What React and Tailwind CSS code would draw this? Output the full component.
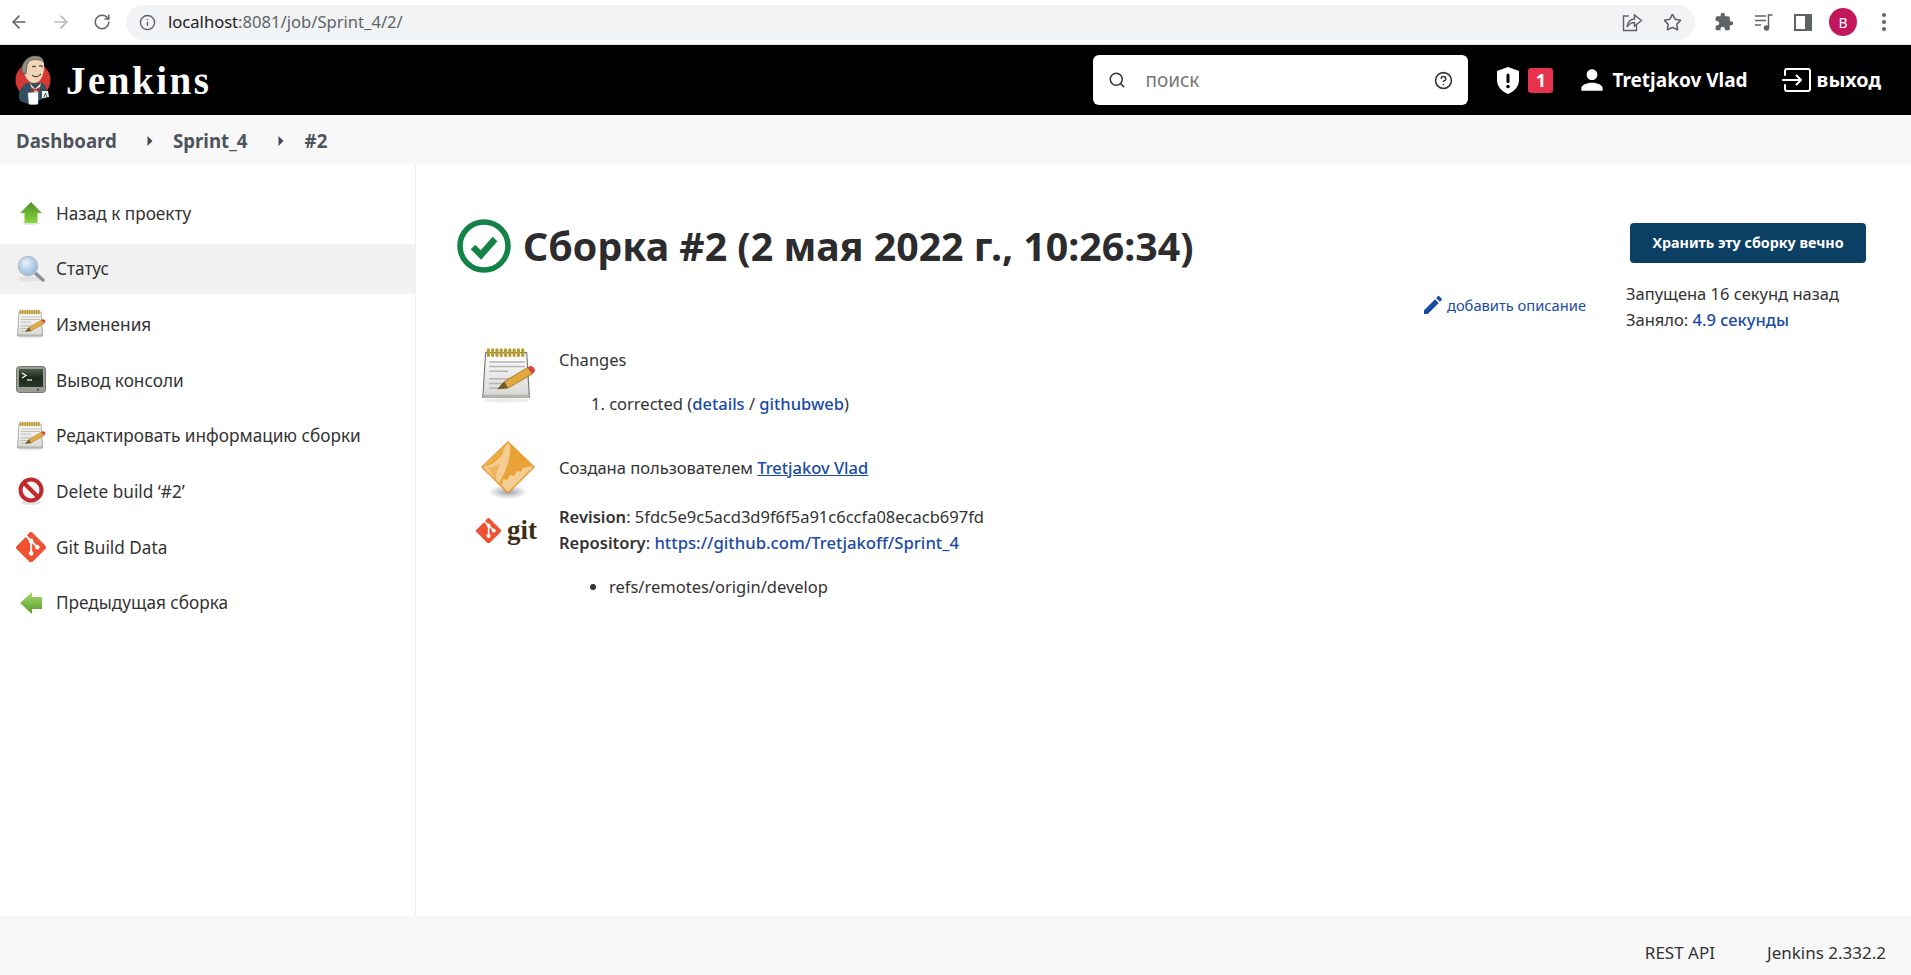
import React from "react";
import { ArrowLeft, ArrowRight, RotateCw, Info, Star, Search, CircleHelp } from "lucide-react";

// Tango style icons, drawn by hand
const UpIcon = () => (
  <svg width="24" height="24" viewBox="0 0 24 24">
    <defs>
      <linearGradient id="up" x1="0" y1="0" x2="0" y2="1">
        <stop offset="0" stopColor="#4c8f2a" />
        <stop offset="1" stopColor="#8ad63c" />
      </linearGradient>
    </defs>
    <ellipse cx="12" cy="22.5" rx="9" ry="1.5" fill="#e2e2e2" />
    <path d="M12 1 L23 12 H18.5 V22 H5.5 V12 H1 Z" fill="url(#up)" />
  </svg>
);

const LeftIcon = () => (
  <svg width="24" height="24" viewBox="0 0 24 24">
    <defs>
      <linearGradient id="left" x1="0" y1="0" x2="0" y2="1">
        <stop offset="0" stopColor="#a8dc70" />
        <stop offset="1" stopColor="#55982a" />
      </linearGradient>
    </defs>
    <path d="M1 12 L13 1 V6 H23 V18 H13 V23 Z" fill="url(#left)" />
  </svg>
);

const SearchIcon = () => (
  <svg width="30" height="30" viewBox="0 0 30 30">
    <defs>
      <radialGradient id="lens" cx="0.4" cy="0.35" r="0.7">
        <stop offset="0" stopColor="#e8f2fb" />
        <stop offset="1" stopColor="#8fb4dc" />
      </radialGradient>
    </defs>
    <ellipse cx="14" cy="25" rx="12" ry="2.5" fill="#e2e2e2" />
    <path d="M18 18 L27 26" stroke="#8a8f92" strokeWidth="3.6" strokeLinecap="round" />
    <circle cx="12" cy="12" r="9.5" fill="url(#lens)" stroke="#b4bec6" strokeWidth="1.6" />
  </svg>
);

const NotepadIcon = ({ size = 30 }) => (
  <svg width={size} height={size} viewBox="0 0 30 30">
    <defs>
      <linearGradient id="pad" x1="0" y1="0" x2="0" y2="1">
        <stop offset="0" stopColor="#ffffff" />
        <stop offset="1" stopColor="#d6d6d2" />
      </linearGradient>
    </defs>
    <ellipse cx="14.5" cy="28.5" rx="12" ry="1.2" fill="#ececec" />
    <path d="M3 3 H25 L26.5 27 H1.5 Z" fill="url(#pad)" stroke="#77776f" strokeWidth="0.6" />
    <rect x="1.6" y="25.5" width="24.8" height="1.8" fill="#b5b5b0" />
    <path d="M4.5 1.5 V4.5 M6.8 1.5 V4.5 M9.1 1.5 V4.5 M11.4 1.5 V4.5 M13.7 1.5 V4.5 M16 1.5 V4.5 M18.3 1.5 V4.5 M20.6 1.5 V4.5 M22.9 1.5 V4.5" stroke="#b89c2f" strokeWidth="1.7" strokeLinecap="round" />
    <path d="M5 8 H24 M5 10.5 H24 M5 13 H15 M5 17 H18 M5 19.5 H14 M5 22 H12" stroke="#b4b4b0" strokeWidth="0.8" />
    <path d="M9.5 22.5 L13 18.5 L25.5 11 L28 14.5 L15 22 Z" fill="#e1a93f" stroke="#8f6a1e" strokeWidth="0.4" />
    <path d="M9.5 22.5 L13 18.5 L15 22 Z" fill="#6e5a30" />
    <path d="M25.5 11 L27 10 Q29.3 10.5 29.5 12.8 L28 14.5 Z" fill="#d8433c" />
  </svg>
);

const TerminalIcon = () => (
  <svg width="30" height="28" viewBox="0 0 30 28">
    <defs>
      <linearGradient id="screen" x1="0" y1="0" x2="0" y2="1">
        <stop offset="0" stopColor="#4d5c48" />
        <stop offset="0.5" stopColor="#1d2a1a" />
        <stop offset="1" stopColor="#2a3a26" />
      </linearGradient>
    </defs>
    <rect x="0.5" y="0.5" width="29" height="26" rx="3" fill="#9a9d97" stroke="#77796f" />
    <rect x="3" y="3" width="24" height="18" fill="url(#screen)" />
    <path d="M6 7 L10 9.5 L6 12" stroke="#fff" strokeWidth="1.2" fill="none" />
    <path d="M11 14 H16" stroke="#fff" strokeWidth="1.2" />
    <rect x="21" y="23" width="2" height="1.4" fill="#333" />
  </svg>
);

const NoIcon = () => (
  <svg width="28" height="28" viewBox="0 0 28 28">
    <ellipse cx="14" cy="25.5" rx="10" ry="2.3" fill="#e0e0e0" />
    <circle cx="14" cy="13" r="10.5" fill="#f4f4f4" stroke="#c1272d" strokeWidth="4" />
    <path d="M6.5 5.5 L21.5 20.5" stroke="#c1272d" strokeWidth="4" />
  </svg>
);

const GitMark = ({ size = 30 }) => (
  <svg width={size} height={size} viewBox="0 0 92 92">
    <path
      fill="#f05133"
      d="M90.2 41.9 50.1 1.8a5.9 5.9 0 0 0-8.4 0l-8.3 8.3 10.6 10.6a7 7 0 0 1 8.9 9l10.2 10.2a7 7 0 1 1-4.2 4l-9.5-9.5v25a7 7 0 1 1-5.8-.2V34.9a7 7 0 0 1-3.8-9.2L29.9 15.3 1.8 43.4a5.9 5.9 0 0 0 0 8.4l40.1 40.1a5.9 5.9 0 0 0 8.4 0l39.9-39.9a5.9 5.9 0 0 0 0-8.4"
    />
  </svg>
);

const FingerprintIcon = () => (
  <svg width="56" height="58" viewBox="0 0 56 58">
    <defs>
      <radialGradient id="shadow" cx="0.5" cy="0.5" r="0.5">
        <stop offset="0" stopColor="#9aa2aa" />
        <stop offset="1" stopColor="#ffffff" />
      </radialGradient>
    </defs>
    <ellipse cx="28" cy="51" rx="20" ry="7" fill="url(#shadow)" />
    <path d="M28 1 L54 26 L28 52 L2 26 Z" fill="#f3cd92" stroke="#ea9a2e" strokeWidth="1.5" />
    <path d="M28 2 L24 8 C22 16 17 22 4 26 L28 2 Z" fill="#eca93f" />
    <path d="M30 3 L52 25 L43 27 L41 31 L37 30 L34 35 L30 34 L27 39 L23 38 L22 44 L19 42 C25 32 31 20 30 3 Z" fill="#e9a238" />
    <path d="M8 27 L20 23 C17 30 15 36 17 41 Z" fill="#eeb45e" />
  </svg>
);

const JenkinsLogo = () => (
  <svg width="38" height="50" viewBox="0 0 38 50">
    <circle cx="18" cy="25" r="17.5" fill="#d33833" />
    <path d="M5 46 C2 38 6 31 12 28 L27 28 C32 31 33 37 31 43 L22 46 L16 50 Z" fill="#335061" />
    <path d="M15 28 L20 34 L26 28 L24 36 L20 37 L17 35 Z" fill="#e7e7e2" />
    <path d="M16 32 L20 34.5 L25 32 L25 36.5 L20 35.5 L16 37 Z" fill="#b3302c" />
    <path d="M8 13 C8 6 14 1 20 1 C27 1 30 7 29 14 C28 22 25 28 19 28 C13 28 9 21 8 13 Z" fill="#f0d6b7" />
    <path d="M7 18 C5 7 14 0 21 1 C25 1 28 3 29 7 C25 4 18 4 14 6 L12 10 L11 19 Z" fill="#8d8f88" stroke="#43302a" strokeWidth="0.6" />
    <path d="M17 12 Q19 10 21 12 M24 11 Q26 10 28 12" stroke="#231f20" strokeWidth="1" fill="none" />
    <path d="M17 20 Q21 24 26 19" stroke="#231f20" strokeWidth="1" fill="none" />
    <path d="M13 38 L23 37 L23 49 Q18 50 14 49 Z" fill="#fff" stroke="#ddd" strokeWidth="0.5" />
    <path d="M27 36 L33 36 L34 42 L27 43 Z" fill="#fff" />
    <path d="M29 42 L30.5 38 L32 42" stroke="#231f20" strokeWidth="0.8" fill="none" />
  </svg>
);

const SuccessIcon = () => (
  <svg width="54" height="54" viewBox="0 0 54 54">
    <circle cx="27" cy="27" r="24" fill="none" stroke="#138347" strokeWidth="5.5" />
    <path d="M16 28 L24 36 L38 20" fill="none" stroke="#138347" strokeWidth="6.5" />
  </svg>
);

const ShieldAlert = () => (
  <svg width="24" height="27" viewBox="0 0 24 27">
    <path d="M12 0 L23 4 V13 C23 20 18 24.5 12 27 C6 24.5 1 20 1 13 V4 Z" fill="#fff" />
    <rect x="10.5" y="6.5" width="3" height="9.5" rx="1.5" fill="#000" />
    <circle cx="12" cy="19.5" r="1.8" fill="#000" />
  </svg>
);

const PersonIcon = () => (
  <svg width="32" height="32" viewBox="0 0 24 24" fill="#fff">
    <path d="M12 12c2.21 0 4-1.79 4-4s-1.79-4-4-4-4 1.79-4 4 1.79 4 4 4zm0 2c-2.67 0-8 1.34-8 4v2h16v-2c0-2.66-5.33-4-8-4z" />
  </svg>
);

const LogoutIcon = () => (
  <svg width="29" height="24" viewBox="0 0 29 24" fill="none" stroke="#fff" strokeWidth="2" strokeLinecap="round" strokeLinejoin="round">
    <path d="M3 7 V3 a2 2 0 0 1 2-2 H26 a2 2 0 0 1 2 2 V21 a2 2 0 0 1-2 2 H5 a2 2 0 0 1-2-2 V17" />
    <path d="M1 12 H19 M14.5 7.5 L19 12 L14.5 16.5" />
  </svg>
);

const Caret = () => (
  <svg width="6" height="10" viewBox="0 0 6 10">
    <path d="M0.5 0 L5.5 5 L0.5 10 Z" fill="#444b53" />
  </svg>
);

const EditIcon = () => (
  <svg width="24" height="24" viewBox="0 0 24 24" fill="#1a4ba6">
    <path d="M3 17.25V21h3.75L17.81 9.94l-3.75-3.75L3 17.25zM20.71 7.04a1 1 0 0 0 0-1.41l-2.34-2.34a1 1 0 0 0-1.41 0l-1.83 1.83 3.75 3.75 1.83-1.83z" />
  </svg>
);

const ChromeShare = () => (
  <svg width="21" height="20" viewBox="0 0 21 20" fill="none" stroke="#5f6368" strokeWidth="1.4">
    <path d="M7 4 H1.5 V18.5 H14.5 V13" />
    <path d="M5 15 C6 9 9 7 12.5 7 V3 L19.5 8.5 L12.5 14 V10.5 C9.5 10.5 7 12 5 15 Z" />
  </svg>
);

const ChromePuzzle = () => (
  <svg width="20" height="20" viewBox="0 0 24 24" fill="#5f6368">
    <path d="M20.5 11H19V7c0-1.1-.9-2-2-2h-4V3.5C13 2.12 11.88 1 10.5 1S8 2.12 8 3.5V5H4c-1.1 0-1.99.9-1.99 2v3.8H3.5c1.49 0 2.7 1.21 2.7 2.7s-1.21 2.7-2.7 2.7H2V20c0 1.1.9 2 2 2h3.8v-1.5c0-1.49 1.21-2.7 2.7-2.7 1.49 0 2.7 1.21 2.7 2.7V22H17c1.1 0 2-.9 2-2v-4h1.5c1.38 0 2.5-1.12 2.5-2.5S21.88 11 20.5 11z" />
  </svg>
);

const ChromeQueue = () => (
  <svg width="20" height="18" viewBox="0 0 20 18" fill="none" stroke="#5f6368" strokeWidth="1.5">
    <path d="M1 3 H12 M1 7.5 H12 M1 12 H7" />
    <path d="M14.5 15 V2 H18.5" />
    <circle cx="12.5" cy="15" r="2" fill="#5f6368" />
  </svg>
);

const sideItems = [
  { label: "Назад к проекту", icon: <UpIcon /> },
  { label: "Статус", icon: <SearchIcon />, active: true },
  { label: "Изменения", icon: <NotepadIcon /> },
  { label: "Вывод консоли", icon: <TerminalIcon /> },
  { label: "Редактировать информацию сборки", icon: <NotepadIcon /> },
  { label: "Delete build ‘#2’", icon: <NoIcon /> },
  { label: "Git Build Data", icon: <GitMark /> },
  { label: "Предыдущая сборка", icon: <LeftIcon /> },
];

const App = () => {
  return (
    <div className="flex flex-col h-[975px] overflow-hidden bg-white text-[#333] font-['Noto_Sans',sans-serif]">
      {/* Browser bar */}
      <div className="h-[45px] flex items-center shrink-0 border-b border-[#dcdcdc] text-[#5f6368]">
        <div className="w-[126px] pl-[9px] flex items-center gap-[22px]">
          <ArrowLeft size={20} />
          <ArrowRight size={20} className="text-[#b6b8ba]" />
          <RotateCw size={18} />
        </div>
        <div className="w-[1569px] h-[35px] rounded-full bg-[#f1f3f4] flex items-center pl-[13px] pr-[13px]">
          <Info size={17} />
          <div className="ml-[12px] text-[16.6px] text-[#202124]">
            localhost<span className="text-[#5f6368]">:8081/job/Sprint_4/2/</span>
          </div>
          <div className="ml-auto flex items-center gap-[20px]">
            <ChromeShare />
            <Star size={19} />
          </div>
        </div>
        <div className="flex items-center ml-[19px] gap-[20px]">
          <ChromePuzzle />
          <ChromeQueue />
          <div className="w-[18px] h-[17px] border-[2px] border-r-[7px] border-[#5f6368]" />
          <div className="w-[28px] h-[28px] rounded-full bg-[#c2185b] text-white text-[14px] flex items-center justify-center ml-[-3px]">B</div>
          <div className="flex flex-col gap-[3px] ml-[5px]">
            <div className="w-[4px] h-[4px] rounded-full bg-[#5f6368]" />
            <div className="w-[4px] h-[4px] rounded-full bg-[#5f6368]" />
            <div className="w-[4px] h-[4px] rounded-full bg-[#5f6368]" />
          </div>
        </div>
      </div>

      {/* Jenkins header */}
      <header className="h-[70px] bg-black flex items-center shrink-0 text-white">
        <div className="ml-[15px]"><JenkinsLogo /></div>
        <div className="ml-[13px] text-[39px] font-bold tracking-[2.5px] leading-none font-['Liberation_Serif',serif]">Jenkins</div>
        <div className="ml-auto w-[375px] h-[50px] rounded-[6px] bg-white flex items-center pl-[15px] pr-[15px] text-[#333]">
          <Search size={18} />
          <span className="ml-[19px] text-[19px] text-[#777] mt-[1px]">поиск</span>
          <CircleHelp size={19} className="ml-auto" />
        </div>
        <div className="ml-[28px]"><ShieldAlert /></div>
        <div className="ml-[8px] w-[25px] h-[25px] rounded-[3px] bg-[#e6324b] flex items-center justify-center text-[18px] font-bold">1</div>
        <div className="ml-[23px]"><PersonIcon /></div>
        <div className="ml-[4px] text-[19px] font-bold">Tretjakov Vlad</div>
        <div className="ml-[34px]"><LogoutIcon /></div>
        <div className="ml-[6px] mr-[30px] text-[19.8px] font-bold">выход</div>
      </header>

      {/* Breadcrumbs */}
      <nav className="h-[50px] bg-[#f8f8f8] flex items-center pl-[16px] pt-[2px] shrink-0 text-[18.7px] font-bold text-[#4d545d]">
        <span>Dashboard</span>
        <span className="ml-[30px]"><Caret /></span>
        <span className="ml-[20px]">Sprint_4</span>
        <span className="ml-[30px]"><Caret /></span>
        <span className="ml-[21px]">#2</span>
      </nav>

      <div className="flex flex-1 min-h-0">
        {/* Side panel */}
        <aside className="w-[416px] border-r border-[#f0f0f0] pt-[23px] flex flex-col gap-[5.7px] shrink-0">
          {sideItems.map((item) => (
            <div key={item.label} className={`h-[50px] flex items-center pl-[16px] ${item.active ? "bg-[#f1f1f1]" : ""}`}>
              <div className="w-[30px] flex justify-center">{item.icon}</div>
              <span className="ml-[10px] text-[17.2px] text-[#333] mt-[1px]">{item.label}</span>
            </div>
          ))}
        </aside>

        {/* Main */}
        <main className="flex-1 pl-[41px] pr-[45px]">
          <div className="flex items-start justify-between pt-[53px]">
            <div className="flex items-center">
              <SuccessIcon />
              <h1 className="ml-[12px] mt-[1px] text-[39.3px] font-bold leading-[54px] text-[#2c2c2e]">Сборка #2 (2 мая 2022 г., 10:26:34)</h1>
            </div>
            <button className="mt-[5px] w-[236px] h-[40px] rounded-[4px] bg-[#0b3f63] text-white text-[14.3px] font-bold">Хранить эту сборку вечно</button>
          </div>

          <div className="flex justify-end mt-[8px]">
            <div className="flex items-center h-[24px] mt-[12px] text-[#1a4ba6] text-[14.7px]">
              <EditIcon />
              <span className="ml-[2px]">добавить описание</span>
            </div>
            <div className="ml-[40px] w-[240px] text-[16.5px] leading-[26px]">
              <div>Запущена 16 секунд назад</div>
              <div>Заняло: <span className="text-[#1a4ba6] font-medium">4.9 секунды</span></div>
            </div>
          </div>

          <div className="ml-[23px] mt-[14px] text-[16.5px] leading-[26px]">
            <div className="flex">
              <div className="w-[56px] flex justify-center"><NotepadIcon size={56} /></div>
              <div className="ml-[23px]">
                <div>Changes</div>
                <div className="mt-[18px] ml-[32px]">
                  1. corrected (<span className="text-[#1a4ba6] font-medium">details</span> / <span className="text-[#1a4ba6] font-medium">githubweb</span>)
                </div>
              </div>
            </div>

            <div className="flex items-center mt-[24px]">
              <div className="w-[56px] flex justify-center"><FingerprintIcon /></div>
              <div className="ml-[23px] mb-[4px]">
                Создана пользователем <span className="text-[#1a4ba6] font-medium underline">Tretjakov Vlad</span>
              </div>
            </div>

            <div className="flex mt-[5px]">
              <div className="w-[56px] h-[52px] flex items-center shrink-0">
                <div className="ml-[-4px]"><GitMark size={25} /></div>
                <span className="ml-[6px] text-[27px] font-bold leading-none text-[#3c2e12] font-['Liberation_Serif',serif]">git</span>
              </div>
              <div className="ml-[23px]">
                <div><b className="font-semibold">Revision</b>: 5fdc5e9c5acd3d9f6f5a91c6ccfa08ecacb697fd</div>
                <div><b className="font-semibold">Repository</b>: <span className="text-[#1a4ba6] font-medium text-[16.7px]">https://github.com/Tretjakoff/Sprint_4</span></div>
                <ul className="list-disc ml-[50px] mt-[18px]">
                  <li>refs/remotes/origin/develop</li>
                </ul>
              </div>
            </div>
          </div>
        </main>
      </div>

      {/* Footer */}
      <footer className="h-[59px] bg-[#f8f8f8] flex items-center justify-end shrink-0 pr-[25px] pt-[14px] text-[17px] text-[#333]">
        <span>REST API</span>
        <span className="ml-[52px]">Jenkins 2.332.2</span>
      </footer>
    </div>
  );
};

export default App;
